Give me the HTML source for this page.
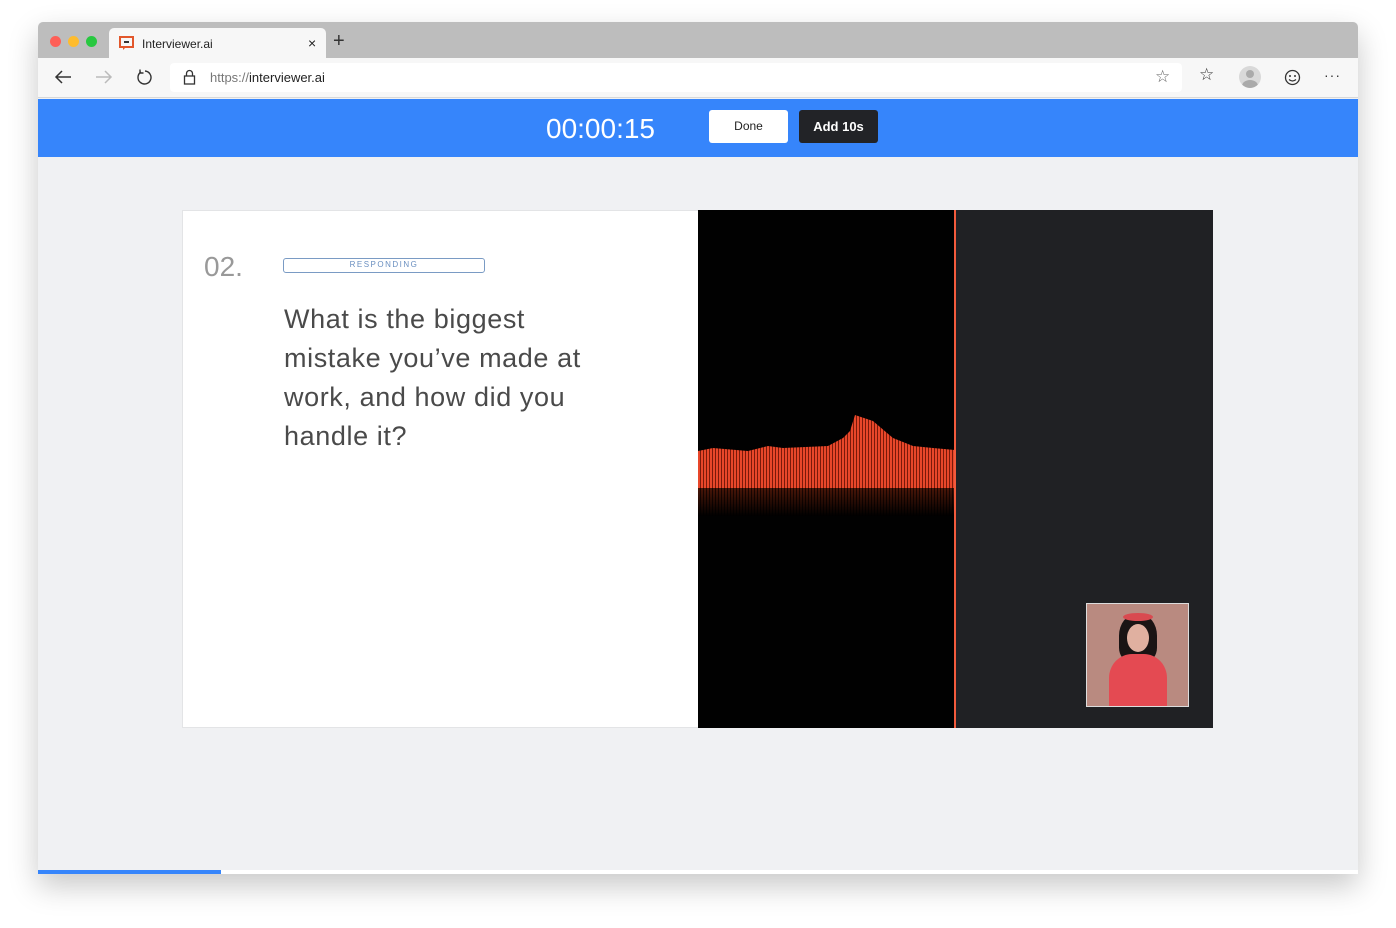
<!DOCTYPE html>
<html><head><meta charset="utf-8"><style>
*{margin:0;padding:0;box-sizing:border-box}
body{width:1396px;height:928px;background:#fff;position:relative;overflow:hidden;font-family:"Liberation Sans",sans-serif}
.win{position:absolute;left:38px;top:22px;width:1320px;height:852px;background:#f0f1f3;box-shadow:0 12px 30px rgba(0,0,0,.22);border-radius:5px 5px 0 0;overflow:hidden}
.tabs{position:absolute;left:0;top:0;width:1320px;height:36px;background:#bdbdbd}
.dot{position:absolute;top:14px;width:11px;height:11px;border-radius:50%}
.tab{position:absolute;left:71px;top:6px;width:217px;height:30px;background:#f7f7f7;border-radius:5px 5px 0 0;font-size:12px;color:#222}
.tb{position:absolute;left:0;top:36px;width:1320px;height:40px;background:#f7f7f7;border-bottom:1px solid #d8d8d8}
.url{position:absolute;left:132px;top:5px;width:1012px;height:29px;background:#fff;border-radius:4px;font-size:13px;color:#777}
.blue{position:absolute;left:0;top:77px;width:1320px;height:58px;background:#3685fb}
.card{position:absolute;left:144px;top:188px;width:1031px;height:518px;background:#fff;border:1px solid #e3e4e6}
.ic{position:absolute;color:#444}
</style></head><body>
<div class="win">
 <div class="tabs">
  <div class="dot" style="left:12px;background:#fe5f57"></div>
  <div class="dot" style="left:30px;background:#febc2e"></div>
  <div class="dot" style="left:48px;background:#28c840"></div>
  <div class="tab">
   <svg style="position:absolute;left:10px;top:8px" width="15" height="14" viewBox="0 0 15 14"><rect x="1" y="1" width="13" height="10" fill="none" stroke="#e2572c" stroke-width="2"/><path d="M4 11 L4 14 L7 11" fill="#e2572c"/><rect x="5" y="5" width="5" height="2" fill="#333"/></svg>
   <span style="position:absolute;left:33px;top:9px">Interviewer.ai</span>
   <span style="position:absolute;left:199px;top:7px;font-size:14px">×</span>
  </div>
  <span style="position:absolute;left:295px;top:8px;font-size:20px;color:#333;font-weight:300">+</span>
 </div>
 <div class="tb">
  <svg class="ic" style="left:16px;top:11px" width="18" height="16" viewBox="0 0 18 16"><path d="M17 8H2M8 2L2 8l6 6" fill="none" stroke="#333" stroke-width="1.5"/></svg>
  <svg class="ic" style="left:57px;top:11px" width="18" height="16" viewBox="0 0 18 16"><path d="M1 8h15M10 2l6 6-6 6" fill="none" stroke="#bbb" stroke-width="1.5"/></svg>
  <svg class="ic" style="left:98px;top:11px" width="17" height="17" viewBox="0 0 17 17"><path d="M5 3A6.5 6.5 0 1 0 9 2" fill="none" stroke="#333" stroke-width="1.4"/><path d="M4 0.5v3.5h3.5" fill="none" stroke="#333" stroke-width="1.4"/></svg>
  <div class="url">
   <svg style="position:absolute;left:13px;top:6px" width="13" height="16" viewBox="0 0 13 16"><rect x="1.5" y="7" width="10" height="8" fill="none" stroke="#333" stroke-width="1.3"/><path d="M3.5 7V4.5a3 3 0 0 1 6 0V7" fill="none" stroke="#333" stroke-width="1.3"/></svg>
   <span style="position:absolute;left:40px;top:7px">https://<span style="color:#222">interviewer.ai</span></span>
   <span style="position:absolute;left:985px;top:4px;font-size:17px;color:#666">☆</span>
  </div>
  <span style="position:absolute;left:1161px;top:7px;font-size:17px;color:#333">☆</span>
  <div style="position:absolute;left:1201px;top:8px;width:22px;height:22px;border-radius:50%;background:#d9d9d9;overflow:hidden"><div style="position:absolute;left:7px;top:4px;width:8px;height:8px;border-radius:50%;background:#aaa"></div><div style="position:absolute;left:3px;top:14px;width:16px;height:12px;border-radius:50%;background:#aaa"></div></div>
  <svg style="position:absolute;left:1246px;top:11px" width="17" height="17" viewBox="0 0 17 17"><circle cx="8.5" cy="8.5" r="7" fill="none" stroke="#333" stroke-width="1.3"/><circle cx="6" cy="7" r="1" fill="#333"/><circle cx="11" cy="7" r="1" fill="#333"/><path d="M5 10.5q3.5 3 7 0" fill="none" stroke="#333" stroke-width="1.2"/></svg>
  <span style="position:absolute;left:1286px;top:9px;font-size:14px;color:#333;letter-spacing:1px">···</span>
 </div>
 <div class="blue">
  <span style="position:absolute;left:508px;top:14px;font-size:28px;color:#fff;font-weight:300">00:00:15</span>
  <div style="position:absolute;left:671px;top:11px;width:79px;height:33px;background:#fff;border-radius:3px;font-size:12px;color:#222;text-align:center;line-height:33px">Done</div>
  <div style="position:absolute;left:761px;top:11px;width:79px;height:33px;background:#222327;border-radius:3px;font-size:13px;color:#fff;text-align:center;line-height:33px;font-weight:bold">Add 10s</div>
 </div>
 <div class="card">
  <span style="position:absolute;left:21px;top:40px;font-size:28px;color:#999;font-weight:300">02.</span>
  <div style="position:absolute;left:100px;top:47px;width:202px;height:15px;border:1.5px solid #7a9bc4;border-radius:3px;font-size:8px;color:#6a8fc0;text-align:center;line-height:12px;letter-spacing:1.5px">RESPONDING</div>
  <div style="position:absolute;left:101px;top:89px;width:340px;font-size:27px;line-height:39px;color:#4a4a4a;letter-spacing:0.6px">What is the biggest mistake you’ve made at work, and how did you handle it?</div>
  <div style="position:absolute;left:515px;top:-1px;width:515px;height:518px;background:#202124">
   <div style="position:absolute;left:0;top:0;width:257px;height:518px;background:#010101"></div>
   <div style="position:absolute;left:0;top:204px;width:257px;height:74px;background:repeating-linear-gradient(90deg,#e8472a 0 2px,#7a1a0a 2px 3px);clip-path:polygon(0 37px,15px 34px,50px 37px,70px 32px,85px 34px,130px 32px,145px 24px,152px 17px,157px 1px,175px 7px,195px 24px,215px 32px,235px 34px,257px 36px,257px 74px,0 74px)"></div>
   <div style="position:absolute;left:0;top:278px;width:257px;height:28px;background:repeating-linear-gradient(90deg,#4a1608 0 2px,#1a0602 2px 3px);-webkit-mask-image:linear-gradient(#000,transparent);mask-image:linear-gradient(#000,transparent)"></div>
   <div style="position:absolute;left:256px;top:0;width:2px;height:518px;background:#f25a3c"></div>
   <div style="position:absolute;left:388px;top:393px;width:103px;height:104px;border:1px solid #ddd;background:#b98a80;overflow:hidden">
    <div style="position:absolute;left:32px;top:10px;width:38px;height:48px;border-radius:45% 45% 30% 30%;background:#1a1414"></div>
    <div style="position:absolute;left:36px;top:9px;width:30px;height:8px;border-radius:50%;background:#d94a50"></div>
    <div style="position:absolute;left:40px;top:20px;width:22px;height:28px;border-radius:50%;background:#e0b0a0"></div>
    <div style="position:absolute;left:22px;top:50px;width:58px;height:60px;border-radius:40% 40% 0 0;background:#e44a52"></div>
   </div>
  </div>
 </div>
 <div style="position:absolute;left:0;top:848px;width:1320px;height:4px;background:#fff"></div>
 <div style="position:absolute;left:0;top:848px;width:183px;height:4px;background:#3685fb"></div>
</div>
</body></html>
